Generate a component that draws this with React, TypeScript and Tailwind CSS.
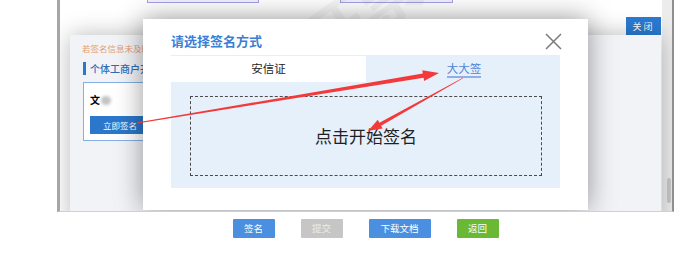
import React from 'react';

type Pt = [number, number];

// tapered arrow: thin tail, thicker shaft near the head, triangular head
const arrowPoints = (s: Pt, t: Pt, w1: number, w2: number, headLen: number, headW: number) => {
  const dx = t[0] - s[0];
  const dy = t[1] - s[1];
  const len = Math.hypot(dx, dy);
  const ux = dx / len;
  const uy = dy / len;
  const nx = -uy;
  const ny = ux;
  const bx = t[0] - ux * headLen;
  const by = t[1] - uy * headLen;
  const p = (x: number, y: number, k: number) => `${(x + nx * k).toFixed(1)},${(y + ny * k).toFixed(1)}`;
  return [
    p(s[0], s[1], w1 / 2),
    p(bx, by, w2 / 2),
    p(bx, by, headW / 2),
    `${t[0]},${t[1]}`,
    p(bx, by, -headW / 2),
    p(bx, by, -w2 / 2),
    p(s[0], s[1], -w1 / 2),
  ].join(' ');
};

const BottomButton = ({ label, color, width }: { label: string; color: string; width: string }) => (
  <button className={`${color} ${width} h-[19px] text-[9.5px] text-white leading-none rounded-[1px]`}>{label}</button>
);

const App = () => {
  return (
    <div className="relative w-[683px] h-[264px] bg-white overflow-hidden font-['Noto_Sans_CJK_SC',sans-serif]">
      {/* page frame */}
      <div className="relative ml-[57px] w-[617px] h-[212px] border-l-[3px] border-r-2 border-b border-l-[#a6a6a6] border-r-[#8f8f8f] border-b-[#d0d0d0] bg-white overflow-hidden">
        {/* underlying page content */}
        <div className="flex gap-[81px] pl-[87px] -mt-[2px]">
          <div className="w-[112px] h-[5px] border border-[#a7a1e6] bg-[#f1f0fd]" />
          <div className="w-[113px] h-[5px] border border-[#a7a1e6] bg-[#f1f0fd]" />
        </div>
        <div className="absolute left-[235px] top-[-22px] rotate-[-35deg] text-[64px] font-bold text-black/[0.035] leading-none">开票</div>

        {/* scrollbar track */}
        <div className="absolute right-0 top-0 w-[10px] h-full bg-[#ececec]">
          <div className="absolute right-[1px] top-[178px] w-[4px] h-[25px] rounded-[2px] bg-[#c9c9c9]" />
        </div>

        {/* close button of the panel */}
        <button className="absolute left-[566px] top-[17px] w-[35px] h-[18px] bg-[#2b7bd3] text-white text-[9px] tracking-[2px] leading-none">关闭</button>

        {/* panel layer */}
        <div className="absolute left-[10px] top-[35px] w-[591px] h-[190px] bg-[#f2f3f7] shadow-[0_0_22px_rgba(0,0,0,0.28)] pl-[12px] pt-[7px]">
          <p className="text-[8.5px] text-[#e59c6e] leading-[12px]">若签名信息未及时更新，请刷新页面</p>
          <div className="flex items-center gap-[4px] mt-[8px] ml-[1px]">
            <span className="w-[3px] h-[13px] bg-[#2a77cc]" />
            <span className="text-[10px] font-medium text-[#2d6db8] leading-[13px]">个体工商户开业登记申请书</span>
          </div>
          <div className="mt-[7px] ml-[1px] w-[260px] h-[59px] border border-[#85b0e6] bg-white px-[6px] pt-[10px]">
            <div className="flex items-center gap-[1px]">
              <span className="text-[10px] font-bold text-black leading-[14px]">文</span>
              <span className="w-[10px] h-[9px] rounded-full bg-[#c4c4c4] blur-[1.5px]" />
            </div>
            <button className="mt-[9px] w-[60px] h-[18px] bg-[#2a77cc] text-white text-[8.5px] leading-none">立即签名</button>
          </div>
        </div>

        {/* dialog */}
        <div className="absolute left-[83px] top-[19px] w-[445px] h-[191px] bg-white shadow-[0_0_26px_rgba(0,0,0,0.4)] px-[28px] pt-[13px]">
          <h2 className="text-[13px] font-bold text-[#3a7fd4] leading-[17px]">请选择签名方式</h2>
          <svg className="absolute right-[26px] top-[14px]" width="17" height="17" viewBox="0 0 17 17">
            <path d="M1 1 L16 16 M16 1 L1 16" stroke="#7a7a7a" strokeWidth="1.5" />
          </svg>
          <div className="mt-[6px] flex h-[27px] border-t border-[#e8eef5]">
            <div className="w-[195px] bg-white flex items-center justify-center text-[11.5px] text-[#222]">安信证</div>
            <div className="flex-1 bg-[#e6f0fa] flex items-center justify-center text-[11.5px]">
              <span className="text-[#4f84d6] border-b-2 border-[#8db0ea] leading-[14px] pb-[1px] mt-[1px] ml-[2px]">大大签</span>
            </div>
          </div>
          <div className="h-[106px] bg-[#e6f0fa] pt-[14px] pl-[19px] pr-[18px]">
            <div className="h-[80px] border border-dashed border-[#4a4a4a] flex items-center justify-center">
              <span className="text-[17px] text-[#1f1f1f]">点击开始签名</span>
            </div>
          </div>
        </div>
      </div>

      {/* bottom action row */}
      <div className="ml-[57px] w-[617px] flex justify-center gap-[26px] mt-[7px]">
        <BottomButton label="签名" color="bg-[#4a8fe0]" width="w-[42px]" />
        <BottomButton label="提交" color="bg-[#c6c6c6] !text-[#ececec]" width="w-[42px]" />
        <BottomButton label="下载文档" color="bg-[#4a8fe0]" width="w-[62px]" />
        <BottomButton label="返回" color="bg-[#6ab934]" width="w-[42px]" />
      </div>

      {/* red annotation arrows */}
      <svg className="absolute left-0 top-0 pointer-events-none" width="683" height="264">
        <polygon points={arrowPoints([137, 123], [439, 73], 0.8, 4.5, 16, 11)} fill="#f23a3b" />
        <polygon points={arrowPoints([463, 78], [368, 131], 0.6, 3.5, 14, 10)} fill="#f23a3b" />
      </svg>
    </div>
  );
};

export default App;
